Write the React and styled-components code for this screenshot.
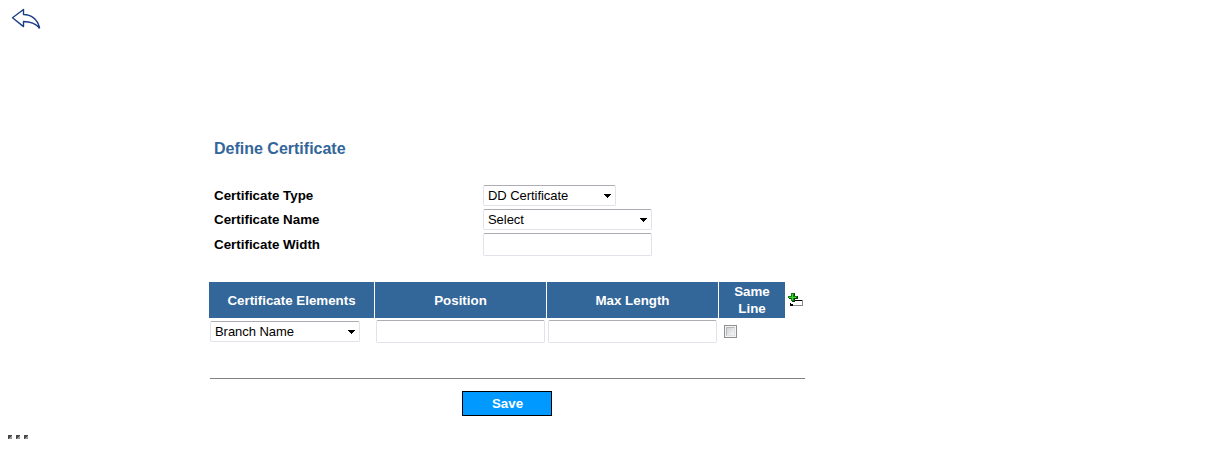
import React from "react";
import styled, { createGlobalStyle } from "styled-components";

const GlobalStyle = createGlobalStyle`
  *, *::before { box-sizing: border-box; }
  body {
    margin: 0;
    background: #fff;
    color: #000;
    font-family: Arial, "Liberation Sans", sans-serif;
    font-size: 13.33px;
  }
`;

const Page = styled.main`
  display: flex;
  flex-direction: column;
  height: 452px;
  overflow: hidden;
`;

const TopBar = styled.header`
  height: 139px;
  padding: 8px 0 0 11px;
  svg { display: block; }
`;

const Form = styled.form`
  width: 597px;
  margin-left: 209px;
`;

const Title = styled.h1`
  margin: 0 0 26px 5px;
  color: #336699;
  font-size: 16px;
  line-height: 20px;
`;

const Field = styled.div`
  display: grid;
  grid-template-columns: 269px auto;
  align-items: center;
  justify-content: start;
  height: ${(p) => p.$height || 21}px;
  margin: 0 0 3px 5px;
`;

const Label = styled.label`
  font-weight: bold;
  font-size: 13.36px;
  line-height: 16px;
`;

const control = `
  background: #fff;
  border: 1px solid #e2e3ea;
  border-top-color: #abadb3;
  border-radius: 2px;
`;

const SelectBox = styled.div`
  ${control}
  display: flex;
  align-items: center;
  justify-content: space-between;
  width: ${(p) => p.$width}px;
  height: 21px;
  padding: 0 4px;
  font-size: 13px;
  line-height: 16px;
  letter-spacing: -0.05px;
  white-space: nowrap;
`;

const Input = styled.input`
  ${control}
  display: block;
  width: 169px;
  height: 23px;
  padding: 2px 4px;
  font: 13px Arial, "Liberation Sans", sans-serif;
  outline: none;
`;

const Elements = styled.section`
  display: grid;
  grid-template-columns: 165px 171px 171px 66px 18px;
  column-gap: 1px;
  margin-top: 26px;
`;

const HeadCell = styled.div`
  display: flex;
  align-items: center;
  justify-content: center;
  height: 36px;
  padding: 0 12px;
  background: #336699;
  color: #fff;
  font-weight: bold;
  font-size: 13.33px;
  line-height: 17px;
  text-align: center;
  white-space: ${(p) => (p.$wrap ? "normal" : "nowrap")};
`;

const AddCell = styled.div`
  padding: 10px 0 0 2px;
  svg { display: block; }
`;

const Cell = styled.div`
  padding: ${(p) => p.$top || 2}px 0 0 ${(p) => p.$left || 1}px;
`;

const CheckBox = styled.span`
  display: block;
  width: 13px;
  height: 13px;
  padding: 1px;
  border: 1px solid #8e8f8f;
  background: #f4f4f4;

  &::before {
    content: "";
    display: block;
    width: 9px;
    height: 9px;
    border: 1px solid #b5b9be;
    border-right-color: #dfe1e3;
    border-bottom-color: #dfe1e3;
    background: linear-gradient(135deg, #cfd2d6, #f6f6f6);
  }
`;

const Rule = styled.hr`
  width: 595px;
  height: 1px;
  margin: 35px 0 0 1px;
  border: 0;
  background: #808080;
`;

const SaveButton = styled.button`
  display: block;
  width: 90px;
  height: 25px;
  margin: 12px 0 0 253px;
  padding: 0 0 0 1px;
  border: 1px solid #000;
  background: #0099ff;
  color: #fff;
  font: bold 13.33px Arial, "Liberation Sans", sans-serif;
`;

const Dots = styled.footer`
  display: flex;
  gap: 4px;
  padding: 19px 0 0 8px;
`;

const Dot = styled.i`
  width: 4px;
  height: 4px;
  background: linear-gradient(135deg, #484848 50%, #999 58%);
`;

const BackIcon = () => (
  <svg width="31" height="23" viewBox="0 0 31 23" fill="none" stroke="#1b3c86" strokeWidth="1.4" strokeLinejoin="round">
    <path d="M1.5 9.7 L12.5 1.5 V6.5 C20 6.5 26.5 11 28.5 19.8 C24 14.8 19 13.5 12.5 13.5 V18.6 Z" />
    <path d="M27 17.5 L28.5 20.2" strokeWidth="1.8" />
  </svg>
);

const Arrow = () => (
  <svg width="7" height="4" viewBox="0 0 7 4" shapeRendering="crispEdges">
    <path d="M0 0h7v1h-1v1h-1v1h-1v1h-1v-1h-1v-1h-1v-1h-1z" fill="#000" />
  </svg>
);

const AddIcon = () => (
  <svg width="15" height="15" viewBox="0 0 15 15" shapeRendering="crispEdges">
    <path d="M14 8h1v6H5v-1h9z" fill="#888" />
    <path d="M7 8h7v1H7zM2 11h1v1h2v2H2z" fill="#000" />
    <path d="M4 1h3v3h3v3H7v3H4V7H1V4h3z" fill="#063d06" />
    <path d="M3 1h3v3h3v2H6v3H3V6H0V4h3z" fill="#168016" />
    <path d="M4 2h1v3h3v1H5v2H4V6H1V5h3z" fill="#3cd830" />
  </svg>
);

const Select = ({ width, children }) => (
  <SelectBox $width={width} role="combobox" tabIndex={0}>
    <span>{children}</span>
    <Arrow />
  </SelectBox>
);

export default function App() {
  return (
    <>
      <GlobalStyle />
      <Page>
        <TopBar><BackIcon /></TopBar>
        <Form onSubmit={(e) => e.preventDefault()}>
          <Title>Define Certificate</Title>
          <Field>
            <Label>Certificate Type</Label>
            <Select width={133}>DD Certificate</Select>
          </Field>
          <Field>
            <Label>Certificate Name</Label>
            <Select width={169}>Select</Select>
          </Field>
          <Field $height={23}>
            <Label htmlFor="width">Certificate Width</Label>
            <Input id="width" />
          </Field>
          <Elements>
            <HeadCell>Certificate Elements</HeadCell>
            <HeadCell>Position</HeadCell>
            <HeadCell>Max Length</HeadCell>
            <HeadCell $wrap>Same Line</HeadCell>
            <AddCell><AddIcon /></AddCell>
            <Cell $top={3}><Select width={150}>Branch Name</Select></Cell>
            <Cell><Input /></Cell>
            <Cell><Input /></Cell>
            <Cell $top={7} $left={5}><CheckBox role="checkbox" /></Cell>
          </Elements>
          <Rule />
          <SaveButton type="submit">Save</SaveButton>
        </Form>
        <Dots><Dot /><Dot /><Dot /></Dots>
      </Page>
    </>
  );
}
